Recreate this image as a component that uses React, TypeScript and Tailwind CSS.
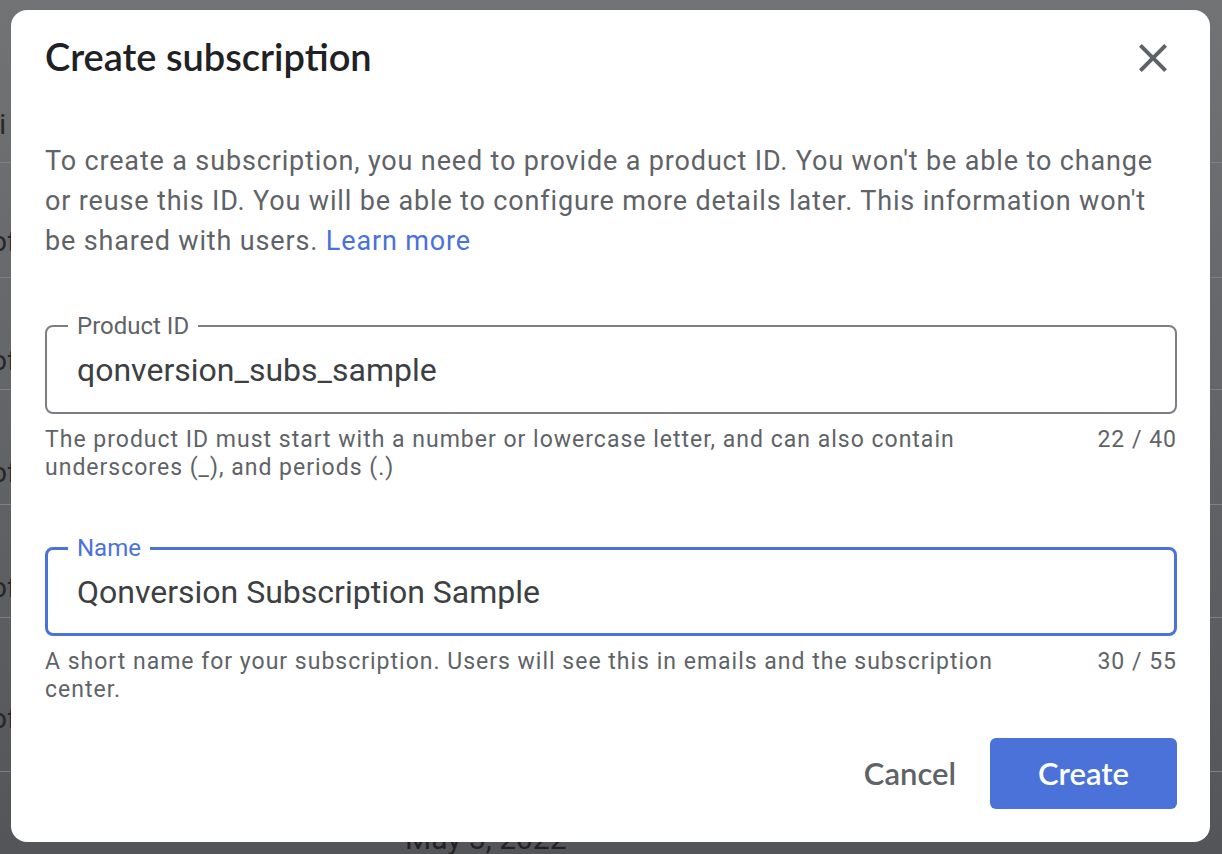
import { useState } from "react";

type Fila = { alto: string; texto: string; pt: string };

const filasFondo: Fila[] = [
  { alto: "h-[115px]", texto: "of", pt: "pt-[64px]" },
  { alto: "h-[112px]", texto: "of", pt: "pt-[68px]" },
  { alto: "h-[115px]", texto: "of", pt: "pt-[68px]" },
  { alto: "h-[113px]", texto: "of", pt: "pt-[68px]" },
  { alto: "h-[154px]", texto: "of", pt: "pt-[86px]" },
];

function IconoCerrar() {
  return (
    <svg viewBox="0 0 24 24" className="h-[48px] w-[48px]" fill="#5f6368">
      <path d="M19 6.41L17.59 5 12 10.59 6.41 5 5 6.41 10.59 12 5 17.59 6.41 19 12 13.41 17.59 19 19 17.59 13.41 12z" />
    </svg>
  );
}

export default function App() {
  const [productId] = useState("qonversion_subs_sample");
  const [nombre] = useState("Qonversion Subscription Sample");

  return (
    <div className="relative h-[854px] w-[1222px] overflow-hidden bg-gradient-to-b from-[#727375] to-[#545559] font-['Roboto',sans-serif]">
      {/* página de fondo, atenuada por el modal */}
      <div className="text-[28px] text-[#262628]">
        <div className="h-[163px] border-b border-[#7f8083] pt-[104px]">
          <span className="ml-[-10px]">ti</span>
        </div>
        {filasFondo.map((fila, i) => (
          <div
            key={i}
            className={`${fila.alto} ${fila.pt} border-b border-[#7f8083] leading-[30px]`}
          >
            <span className="ml-[-9px]">{fila.texto}</span>
          </div>
        ))}
        <div className="pl-[405px] pt-[50px] text-[30px] leading-[34px] text-[#222224]">
          May 3, 2022
        </div>
      </div>

      <div className="absolute inset-0 pl-[11px] pt-[10px]">
        <div className="flex h-[832px] w-[1199px] flex-col rounded-[16px] bg-white pl-[34px] pr-[33px] pt-[24px]">
          <div className="flex h-[48px] items-center justify-between">
            <h2 className="pb-[4px] font-['Lato',sans-serif] text-[38px] font-semibold leading-[44px] text-[#202124]">
              Create subscription
            </h2>
            <button type="button" className="flex h-[48px] w-[48px] items-center justify-center">
              <IconoCerrar />
            </button>
          </div>

          <p className="mt-[59px] text-[27px] leading-[40px] tracking-[0.85px] text-[#5f6368]">
            To create a subscription, you need to provide a product ID. You won't be able to change
            or reuse this ID. You will be able to configure more details later. This information
            won't be shared with users.{" "}
            <a className="text-[#4a72d9]">Learn more</a>
          </p>

          <div className="relative mt-[64px] flex h-[89px] items-center rounded-[8px] border-2 border-[#7b7e82] pl-[30px]">
            <span className="absolute -top-[15px] left-[21px] bg-white px-[9px] text-[24px] leading-[28px] text-[#5f6368]">
              Product ID
            </span>
            <span className="text-[32px] text-[#3c4043]">{productId}</span>
          </div>
          <div className="mt-[12px] flex justify-between text-[23px] leading-[28px] tracking-[1px] text-[#5f6368]">
            <p className="flex-1 pr-[48px]">
              The product ID must start with a number or lowercase letter, and can also contain
              underscores (_), and periods (.)
            </p>
            <span>22 / 40</span>
          </div>

          <div className="relative mt-[65px] flex h-[89px] items-center rounded-[8px] border-3 border-[#4a72d9] pl-[29px]">
            <span className="absolute -top-[16px] left-[20px] bg-white px-[9px] text-[24px] leading-[28px] text-[#4a72d9]">
              Name
            </span>
            <span className="text-[32px] text-[#3c4043]">{nombre}</span>
          </div>
          <div className="mt-[12px] flex justify-between text-[23px] leading-[28px] tracking-[1px] text-[#5f6368]">
            <p className="flex-1 pr-[48px]">
              A short name for your subscription. Users will see this in emails and the subscription
              center.
            </p>
            <span>30 / 55</span>
          </div>

          <div className="mt-[34px] flex justify-end gap-[10px] font-['Lato',sans-serif] text-[31px] font-semibold">
            <button type="button" className="h-[71px] rounded-[6px] px-[24px] text-[#5f6368]">
              Cancel
            </button>
            <button
              type="button"
              className="h-[71px] w-[187px] rounded-[6px] bg-[#4a72d9] text-white"
            >
              Create
            </button>
          </div>
        </div>
      </div>
    </div>
  );
}
